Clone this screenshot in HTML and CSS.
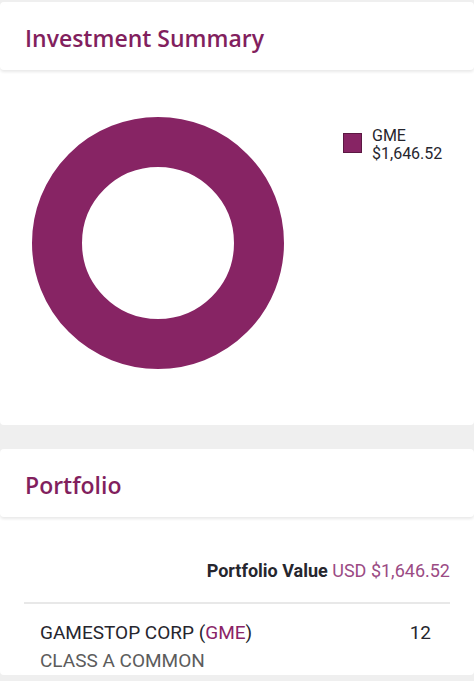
FILE: index.html
```html
<!DOCTYPE html>
<html lang="en">
  <head>
    <meta charset="UTF-8" />
    <meta name="viewport" content="width=device-width, initial-scale=1.0" />
    <title>Investment Summary</title>
    <link rel="stylesheet" href="styles.css">
  </head>

  <body>
    <div class="page">
      <div class="card">
        <div class="card-header">
          <h1>Investment Summary</h1>
        </div>
        <div class="chart-body">
          <svg class="donut" width="252" height="252" viewBox="0 0 252 252">
            <circle cx="126" cy="126" r="101" fill="none" stroke="#872464" stroke-width="50" />
          </svg>
          <div class="legend">
            <span class="legend-swatch"></span>
            <div class="legend-text">
              <div>GME</div>
              <div>$1,646.52</div>
            </div>
          </div>
        </div>
      </div>

      <div class="gap"></div>

      <div class="card">
        <div class="card-header">
          <h1>Portfolio</h1>
        </div>
        <div class="portfolio-body">
          <p class="portfolio-value">
            <strong>Portfolio Value</strong>
            <span class="value">USD $1,646.52</span>
          </p>
          <div class="holding">
            <div class="holding-name">
              <div>GAMESTOP CORP (<span class="ticker">GME</span>)</div>
              <div class="holding-class">CLASS A COMMON</div>
            </div>
            <div class="holding-qty">12</div>
          </div>
        </div>
      </div>
    </div>
  </body>
</html>
```

FILE: styles.css
```css
body,
html {
  margin: 0;
  padding: 0;
  background-color: #efefef;
  font-family: Roboto, "Liberation Sans", sans-serif;
  color: #26262e;
}

.page {
  padding-top: 2px;
}

.card {
  background: white;
  border-radius: 4px;
}

.card-header {
  height: 68px;
  display: flex;
  align-items: center;
  padding: 3px 25px 0;
  box-sizing: border-box;
  box-shadow: 0 2px 3px rgba(0, 0, 0, 0.09);
  border-radius: 4px;
}

.card-header h1 {
  margin: 0;
  font-family: "Open Sans", sans-serif;
  font-weight: 600;
  font-size: 23px;
  color: #821f5e;
}

.chart-body {
  height: 355px;
  display: flex;
  align-items: flex-start;
  padding-left: 32px;
  box-sizing: border-box;
}

.donut {
  margin-top: 47px;
}

.legend {
  display: flex;
  gap: 10px;
  margin-top: 57px;
  margin-left: 59px;
  font-size: 16px;
  line-height: 18px;
}

.legend-swatch {
  width: 17px;
  height: 18px;
  margin-top: 6px;
  background: #872464;
  border: 1px solid #5c1843;
}

.gap {
  height: 24px;
}

.portfolio-body {
  padding: 0 24px;
  height: 158px;
}

.portfolio-value {
  margin: 0;
  padding: 43px 0 21px;
  text-align: right;
  font-size: 18px;
  border-bottom: 2px solid #e8e8e8;
}

.portfolio-value strong {
  font-weight: 700;
}

.portfolio-value .value {
  color: #9b4b84;
}

.holding {
  display: flex;
  justify-content: space-between;
  padding: 15px 19px 0 16px;
  font-size: 19px;
  line-height: 28px;
}

.ticker {
  color: #8a2467;
}

.holding-class {
  color: #5c5c5c;
}
```
